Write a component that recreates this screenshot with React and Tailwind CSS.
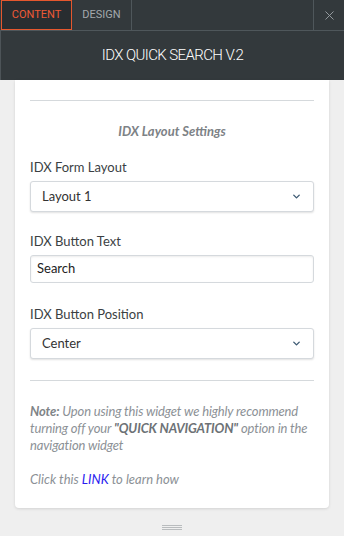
import { ChevronDown, X } from 'lucide-react'

const Select = ({ value }) => (
    <div className="h-[31px] flex items-center justify-between pl-[11px] pr-[11px] border border-[#d5d9dd] rounded-[3px] bg-white shadow-[0_1px_2px_rgba(0,0,0,0.12)]">
        <span className="text-[13px] text-[#333]">{value}</span>
        <ChevronDown size={11} strokeWidth={3} className="text-[#3d5a73]" />
    </div>
)

const Label = ({ children }) => (
    <div className="text-[13px] text-[#3b3f43] mb-[5px] leading-[18px]">{children}</div>
)

const App = () => {
    return (
        <div className="w-[344px] h-[536px] bg-[#efefef] flex flex-col overflow-hidden" style={{ fontFamily: 'Lato, "Noto Sans", sans-serif' }}>
            {/* tabs */}
            <div className="h-[31px] flex bg-[#33393c] border-b border-[#4f575b]" style={{ fontFamily: 'Roboto, sans-serif' }}>
                <div className="ml-[1px] w-[71px] h-[30px] border border-[#e4572e] bg-[#282d30] text-[#ef5a36] text-[11px] flex items-center justify-center">CONTENT</div>
                <div className="w-[60px] h-[30px] border-r border-[#4f575b] text-[#a3a9ad] text-[11px] flex items-center justify-center">DESIGN</div>
                <div className="flex-1" />
                <div className="w-[31px] h-[30px] border-l border-[#4f575b] flex items-center justify-center text-[#9aa0a4]">
                    <X size={15} strokeWidth={1.5} />
                </div>
            </div>

            {/* title */}
            <div className="h-[49px] bg-[#33393c] border-l border-[#4d5458] flex items-center justify-center text-white text-[15px] font-light tracking-[-0.6px]" style={{ fontFamily: 'Roboto, sans-serif' }}>
                IDX QUICK SEARCH V.2
            </div>

            {/* card */}
            <div className="mx-[15px] bg-white rounded-b-[4px] shadow-[0_1px_3px_rgba(0,0,0,0.12)] px-[15px] pt-[20px] pb-[20px]">
                <div className="border-t border-[#d5d9dc]" />
                <div className="text-center text-[13px] font-bold italic text-[#7d8286] mt-[21px] mb-[18px] leading-[18px]">IDX Layout Settings</div>

                <Label>IDX Form Layout</Label>
                <Select value="Layout 1" />

                <div className="mt-[20px]">
                    <Label>IDX Button Text</Label>
                    <div className="h-[28px] flex items-center pl-[6px] border border-[#d5d9dd] rounded-[3px] bg-white shadow-[inset_0_1px_2px_rgba(0,0,0,0.08)]">
                        <span className="text-[13px] text-[#222]">Search</span>
                    </div>
                </div>

                <div className="mt-[22px]">
                    <Label>IDX Button Position</Label>
                    <Select value="Center" />
                </div>

                <div className="border-t border-[#d5d9dc] mt-[21px]" />

                <p className="mt-[22px] text-[13px] italic text-[#8c9196] leading-[17px] tracking-[-0.15px]">
                    <span className="font-bold text-[#7f8488]">Note:</span> Upon using this widget we highly recommend turning off your <span className="font-bold text-[#6d7276]">"QUICK NAVIGATION"</span> option in the navigation widget
                </p>
                <p className="mt-[17px] text-[13px] italic text-[#8c9196] leading-[17px]">
                    Click this <span className="text-[#2a1cf0]">LINK</span> to learn how
                </p>
            </div>

            {/* handle */}
            <div className="flex justify-center mt-[17px]">
                <div className="w-[20px] flex flex-col gap-[1px]">
                    <div className="h-[1px] bg-[#b9bcbe]" />
                    <div className="h-[1px] bg-[#b9bcbe]" />
                    <div className="h-[1px] bg-[#b9bcbe]" />
                </div>
            </div>
        </div>
    )
}

export default App
